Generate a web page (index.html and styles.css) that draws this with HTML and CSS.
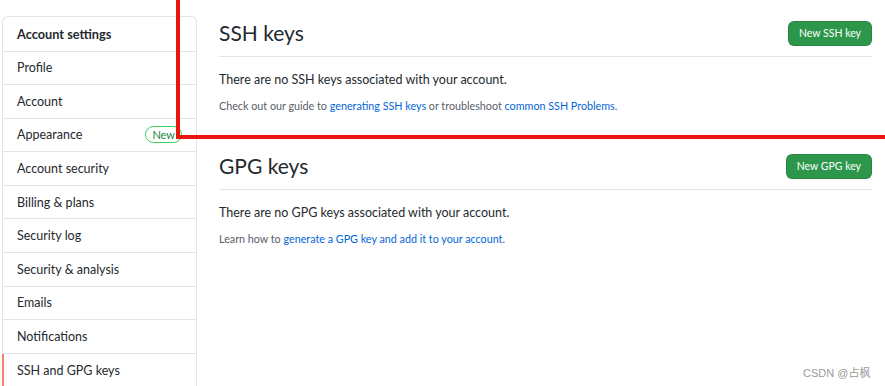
FILE: index.html
```html
<!DOCTYPE html>
<html lang="en">
<head>
<meta charset="utf-8">
<title>SSH and GPG keys</title>
<link rel="stylesheet" href="styles.css">
</head>
<body>
<div class="page">
  <nav class="sidebar">
    <div class="side-head">Account settings</div>
    <a class="side-item" href="#">Profile</a>
    <a class="side-item" href="#">Account</a>
    <a class="side-item" href="#">Appearance <span class="badge">New</span></a>
    <a class="side-item" href="#">Account security</a>
    <a class="side-item" href="#">Billing &amp; plans</a>
    <a class="side-item" href="#">Security log</a>
    <a class="side-item" href="#">Security &amp; analysis</a>
    <a class="side-item" href="#">Emails</a>
    <a class="side-item" href="#">Notifications</a>
    <a class="side-item active" href="#">SSH and GPG keys</a>
  </nav>
  <main class="content">
    <section class="keys">
      <div class="sub-head">
        <h2 class="sub-title">SSH keys</h2>
        <a class="btn" href="#">New SSH key</a>
      </div>
      <p class="empty">There are no SSH keys associated with your account.</p>
      <p class="note">Check out our guide to <a href="#">generating SSH keys</a> or troubleshoot <a href="#">common SSH Problems</a>.</p>
    </section>
    <section class="keys gpg">
      <div class="sub-head">
        <h2 class="sub-title">GPG keys</h2>
        <a class="btn" href="#">New GPG key</a>
      </div>
      <p class="empty">There are no GPG keys associated with your account.</p>
      <p class="note">Learn how to <a href="#">generate a GPG key and add it to your account</a>.</p>
    </section>
  </main>
</div>
<div class="annot-v"></div>
<div class="annot-h"></div>
<div class="watermark">CSDN @占枫</div>
</body>
</html>
```
FILE: styles.css
```css
* { box-sizing: border-box; }
html, body {
  margin: 0;
  padding: 0;
  background: #fff;
}
body {
  width: 885px;
  height: 386px;
  overflow: hidden;
  position: relative;
  font-family: Lato, "Noto Sans", sans-serif;
  color: #24292e;
}
.page {
  display: flex;
  align-items: flex-start;
  padding: 16px 0 0 2px;
  gap: 22px;
}
.sidebar {
  width: 195px;
  flex: none;
  display: flex;
  flex-direction: column;
  border: 1px solid #e1e4e8;
  border-bottom: none;
  border-radius: 6px 6px 0 0;
}
.side-head {
  height: 33.5px;
  display: flex;
  align-items: center;
  padding: 0 14px;
  font-size: 12.75px;
  font-weight: 700;
}
.side-item {
  position: relative;
  height: 33.6px;
  display: flex;
  align-items: center;
  justify-content: space-between;
  padding: 0 14px;
  border-top: 1px solid #e1e4e8;
  font-size: 12.5px;
  color: #24292e;
  text-decoration: none;
}
.side-item.active::before {
  content: "";
  position: absolute;
  left: -1px;
  top: 0;
  bottom: 0;
  width: 2px;
  background: #f9826c;
}
.badge {
  display: inline-flex;
  align-items: center;
  height: 17px;
  padding: 0 6px;
  border: 1px solid #34d058;
  border-radius: 2em;
  font-size: 11px;
  color: #22863a;
}
.content {
  width: 653px;
  flex: none;
  padding-top: 1px;
}
.sub-head {
  height: 40px;
  display: flex;
  align-items: center;
  justify-content: space-between;
  padding-bottom: 7px;
  border-bottom: 1px solid #e1e4e8;
}
.sub-title {
  margin: 0;
  font-size: 21px;
  font-weight: 400;
  line-height: 32px;
}
.btn {
  display: inline-flex;
  align-items: center;
  height: 25px;
  padding: 0 10px;
  border: 1px solid rgba(27, 31, 35, 0.15);
  border-radius: 6px;
  background: #2c974b;
  color: #fff;
  font-size: 10.5px;
  text-decoration: none;
}
.empty {
  margin: 13px 0 0;
  font-size: 12.5px;
  line-height: 20px;
}
.note {
  margin: 7px 0 0;
  font-size: 10.75px;
  line-height: 18px;
  color: #586069;
}
.note a {
  color: #0366d6;
  text-decoration: none;
}
.gpg {
  margin-top: 35px;
}
.annot-v {
  position: absolute;
  left: 176px;
  top: 0;
  width: 4px;
  height: 139px;
  background: #e8160e;
}
.annot-h {
  position: absolute;
  left: 176px;
  top: 135px;
  width: 709px;
  height: 4px;
  background: #e8160e;
}
.watermark {
  position: absolute;
  left: 803px;
  top: 364px;
  white-space: nowrap;
  font-family: "Liberation Sans", "Noto Sans CJK SC", sans-serif;
  font-size: 11px;
  color: #9a9a9a;
}
```
